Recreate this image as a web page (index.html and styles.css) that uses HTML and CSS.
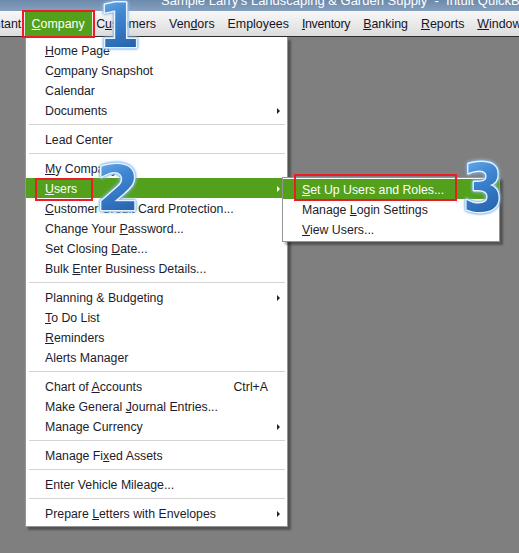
FILE: index.html
```html
<!DOCTYPE html>
<html>
<head>
<meta charset="utf-8">
<link rel="stylesheet" href="styles.css">
</head>
<body>
<div class="titlebar"><span>Sample Larry's Landscaping &amp; Garden Supply &nbsp;- &nbsp;Intuit QuickBooks Enterprise Solutions</span></div>
<nav class="menubar">
  <div class="mi clip">Accountant</div>
  <div class="mi active"><u>C</u>ompany</div>
  <div class="mi">C<u>u</u>stomers</div>
  <div class="mi">Ven<u>d</u>ors</div>
  <div class="mi">Employees</div>
  <div class="mi narrow"><u>I</u>nventory</div>
  <div class="mi"><u>B</u>anking</div>
  <div class="mi"><u>R</u>eports</div>
  <div class="mi"><u>W</u>indow</div>
</nav>
<div class="workspace">
  <div class="menu">
    <div class="item"><span class="label"><u>H</u>ome Page</span></div>
    <div class="item"><span class="label">C<u>o</u>mpany Snapshot</span></div>
    <div class="item"><span class="label">Calendar</span></div>
    <div class="item"><span class="label">Documents</span><span class="arrow"></span></div>
    <div class="sep"></div>
    <div class="item"><span class="label">Lead Center</span></div>
    <div class="sep"></div>
    <div class="item"><span class="label"><u>M</u>y Company</span></div>
    <div class="item active"><span class="label"><u>U</u>sers</span><span class="arrow"></span>
      <div class="submenu">
        <div class="item active"><span class="label"><u>S</u>et Up Users and Roles...</span></div>
        <div class="item"><span class="label">Manage <u>L</u>ogin Settings</span></div>
        <div class="item"><span class="label"><u>V</u>iew Users...</span></div>
      </div>
    </div>
    <div class="item"><span class="label"><u>C</u>ustomer Credit Card Protection...</span></div>
    <div class="item"><span class="label">Change Your <u>P</u>assword...</span></div>
    <div class="item"><span class="label">Set Closing <u>D</u>ate...</span></div>
    <div class="item"><span class="label">Bulk <u>E</u>nter Business Details...</span></div>
    <div class="sep"></div>
    <div class="item"><span class="label">Plannin<u>g</u> &amp; Budgeting</span><span class="arrow"></span></div>
    <div class="item"><span class="label"><u>T</u>o Do List</span></div>
    <div class="item"><span class="label"><u>R</u>eminders</span></div>
    <div class="item"><span class="label">Alerts Manager</span></div>
    <div class="sep"></div>
    <div class="item"><span class="label">Chart of <u>A</u>ccounts</span><span class="key">Ctrl+A</span></div>
    <div class="item"><span class="label">Make General <u>J</u>ournal Entries...</span></div>
    <div class="item"><span class="label">Manage Currency</span><span class="arrow"></span></div>
    <div class="sep"></div>
    <div class="item"><span class="label">Manage Fi<u>x</u>ed Assets</span></div>
    <div class="sep"></div>
    <div class="item"><span class="label">Enter Vehicle Mileage...</span></div>
    <div class="sep"></div>
    <div class="item"><span class="label">Prepare <u>L</u>etters with Envelopes</span><span class="arrow"></span></div>
  </div>
</div>

<div class="redbox box1"></div>
<div class="redbox box2"></div>
<div class="redbox box3"></div>

<svg class="marks" width="519" height="553" viewBox="0 0 519 553">
  <defs>
    <linearGradient id="blue" x1="0" y1="0" x2="0.3" y2="1">
      <stop offset="0" stop-color="#7cbaf0"/>
      <stop offset="0.45" stop-color="#3f86d2"/>
      <stop offset="1" stop-color="#2560aa"/>
    </linearGradient>
  </defs>
  <text class="num" x="119" y="47" font-size="60">1</text>
  <text class="num" x="118" y="210" font-size="62">2</text>
  <text class="num" transform="translate(483 211) scale(0.88 1)" x="0" y="0" font-size="66">3</text>
</svg>
</body>
</html>
```
FILE: styles.css
```css
* { box-sizing: border-box; }

body {
  margin: 0;
  width: 519px;
  height: 553px;
  overflow: hidden;
  position: relative;
  background: #7f7f7f;
  font-family: "Liberation Sans", Arial, sans-serif;
}

.titlebar {
  height: 11px;
  overflow: hidden;
  background: linear-gradient(#6d8aab, #86a0bf);
  color: #ffffff;
  font-size: 13px;
  padding-left: 161px;
  white-space: nowrap;
}
.titlebar span {
  display: block;
  margin-top: -7px;
  line-height: 15px;
}

.menubar {
  display: flex;
  height: 26px;
  background: linear-gradient(#f8f8f8, #dcdcdc);
  border-bottom: 1px solid #2b2b2b;
  font-size: 12.4px;
  color: #15152a;
  white-space: nowrap;
}
.mi {
  padding: 2px 6.5px 0;
  line-height: 23px;
  height: 25px;
}
.mi.clip { margin-left: -47px; padding-left: 6.3px; padding-right: 6.3px; }
.mi.narrow { letter-spacing: -0.3px; }
.mi.active {
  background: #52a01b;
  color: #ffffff;
  height: 26px;
  padding: 2px 7px 0;
  margin: 0 -2px 0 -3px;
}

.workspace { padding-left: 25px; }

.menu {
  position: relative;
  width: 263px;
  background: #ffffff;
  border: 1px solid #959595;
  border-top: none;
  padding: 3px 0;
  box-shadow: 3px 3px 2px rgba(0, 0, 0, 0.35);
  font-size: 12.3px;
  color: #1c1c2c;
}

.item {
  display: flex;
  align-items: center;
  height: 20px;
  padding: 2px 7px 0 19px;
  white-space: nowrap;
}
.item .label { flex: 1; }
.item .key { margin-right: 12px; }
.item .arrow {
  width: 0;
  height: 0;
  border-left: 3px solid #222;
  border-top: 3px solid transparent;
  border-bottom: 3px solid transparent;
}
.item.active {
  position: relative;
  background: #52a01b;
  color: #ffffff;
}
.item.active .arrow { border-left-color: #ffffff; }

.sep {
  height: 1px;
  background: #d3d3d3;
  margin: 4px 2px 4px 3px;
}

.submenu {
  position: absolute;
  left: 256px;
  top: -1px;
  width: 218px;
  background: #ffffff;
  border: 1px solid #959595;
  padding: 1px 0 2px;
  box-shadow: 3px 3px 2px rgba(0, 0, 0, 0.35);
  color: #1c1c2c;
}
.submenu .item { padding-left: 19px; }

.redbox {
  position: absolute;
  border: 2px solid #ec1c24;
}
.box1 { left: 22px; top: 10px; width: 73px; height: 28px; }
.box2 { left: 35px; top: 178px; width: 58px; height: 23px; }
.box3 { left: 294px; top: 174px; width: 163px; height: 27px; }

.marks {
  position: absolute;
  left: 0;
  top: 0;
  pointer-events: none;
}
.num {
  font-family: "DejaVu Sans", sans-serif;
  font-weight: bold;
  text-anchor: middle;
  fill: url(#blue);
  stroke: #e6f3ff;
  stroke-width: 3px;
  stroke-linejoin: round;
  paint-order: stroke;
  filter: drop-shadow(0 0 1px #4d90d6) drop-shadow(0 0 1.5px #a8d2f6);
}
```
